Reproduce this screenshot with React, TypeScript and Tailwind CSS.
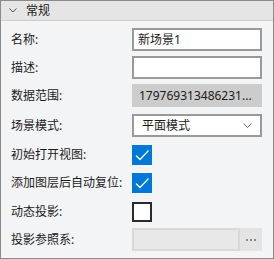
import React from 'react'

const font = "font-['Segoe_UI','Noto_Sans','Noto_Sans_CJK_SC',sans-serif]"

function Label({ text }: { text: string }) {
  return <div className="w-[131px] shrink-0 pl-[10px] text-[12px] leading-none text-[#1b1b1b] whitespace-nowrap">{text}</div>
}

function Check({ checked }: { checked: boolean }) {
  if (!checked) {
    return <div className="w-[20px] h-[20px] border-2 border-[#2b2b2b] bg-white" />
  }
  return (
    <div className="w-[20px] h-[20px] bg-[#0078d7] flex items-center justify-center">
      <svg width="20" height="20" viewBox="0 0 20 20">
        <polyline points="4,10.5 8,14.5 16.5,5.5" fill="none" stroke="white" strokeWidth="1.3" />
      </svg>
    </div>
  )
}

export default function App() {
  return (
    <div className={`${font} w-[274px] h-[259px] border border-[#8a8a8a] bg-[#f3f4f6] flex flex-col`}>
      <div className="h-[20px] bg-[#e5e5e5] border-b border-[#cdcdcd] flex items-center">
        <svg width="8" height="5" viewBox="0 0 8 5" className="ml-[8px]">
          <polyline points="0.5,0.5 4,4 7.5,0.5" fill="none" stroke="#555" strokeWidth="1" />
        </svg>
        <span className="ml-[9px] text-[12px] text-[#1b1b1b] leading-none">常规</span>
      </div>

      <div className="flex flex-col">
        <div className="mt-[7px] h-[23px] flex items-center">
          <Label text="名称:" />
          <div className="w-[130px] h-[23px] border-2 border-[#999999] bg-white flex items-center pl-[4px] text-[12px] text-[#1b1b1b]">
            新场景1
          </div>
        </div>

        <div className="mt-[5px] h-[23px] flex items-center">
          <Label text="描述:" />
          <div className="w-[130px] h-[23px] border-2 border-[#999999] bg-white" />
        </div>

        <div className="mt-[5px] h-[23px] flex items-center">
          <Label text="数据范围:" />
          <div className="w-[130px] h-[23px] bg-[#cccccc] flex items-center pl-[7px] text-[12px] text-[#1b1b1b] whitespace-nowrap overflow-hidden">
            179769313486231...
          </div>
        </div>

        <div className="mt-[7px] h-[23px] flex items-center">
          <Label text="场景模式:" />
          <div className="w-[130px] h-[23px] border-2 border-[#999999] bg-white flex items-center justify-between pl-[8px] pr-[8px] text-[12px] text-[#1b1b1b]">
            <span>平面模式</span>
            <svg width="9" height="5" viewBox="0 0 9 5">
              <polyline points="0.5,0.5 4.5,4.5 8.5,0.5" fill="none" stroke="#666" strokeWidth="1" />
            </svg>
          </div>
        </div>

        <div className="mt-[8px] h-[20px] flex items-center">
          <Label text="初始打开视图:" />
          <Check checked />
        </div>

        <div className="mt-[8px] h-[20px] flex items-center">
          <Label text="添加图层后自动复位:" />
          <Check checked />
        </div>

        <div className="mt-[9px] h-[20px] flex items-center">
          <Label text="动态投影:" />
          <Check checked={false} />
        </div>

        <div className="mt-[6px] h-[23px] flex items-center">
          <Label text="投影参照系:" />
          <div className="w-[108px] h-[23px] border-2 border-[#d9d9d9] bg-[#e8e8e8]" />
          <div className="w-[22px] h-[23px] bg-[#e4e4e4] flex items-center justify-center gap-[2px]">
            <span className="w-[2px] h-[2px] bg-[#8a8a8a]" />
            <span className="w-[2px] h-[2px] bg-[#8a8a8a]" />
            <span className="w-[2px] h-[2px] bg-[#8a8a8a]" />
          </div>
        </div>
      </div>
    </div>
  )
}
